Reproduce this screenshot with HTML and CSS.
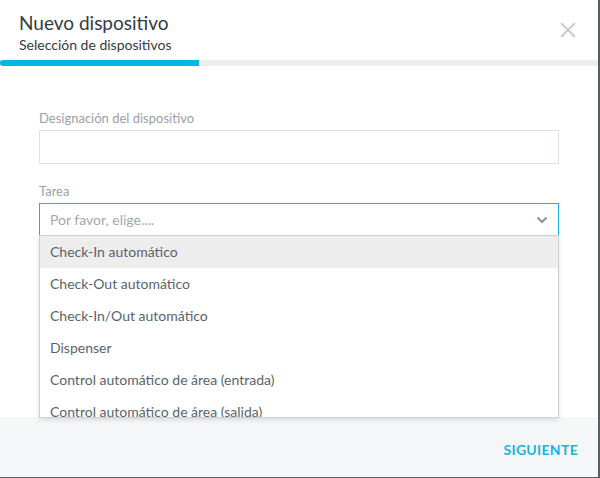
FILE: index.html
```html
<!DOCTYPE html>
<html lang="es">
<head>
<meta charset="utf-8">
<link rel="stylesheet" href="styles.css">
</head>
<body>
<div class="modal">
  <header class="head">
    <div class="titles">
      <h1 class="title">Nuevo dispositivo</h1>
      <div class="subtitle">Selección de dispositivos</div>
    </div>
    <button class="close" aria-label="Cerrar">
      <svg width="16" height="16" viewBox="0 0 16 16"><path d="M1 1L15 15M15 1L1 15" stroke="#c8cacc" stroke-width="1.8" fill="none"/></svg>
    </button>
  </header>
  <div class="progress"><div class="progress-fill" style="width:199px"></div></div>
  <main class="body">
    <label class="label">Designación del dispositivo</label>
    <div class="input"></div>
    <label class="label label-task">Tarea</label>
    <div class="select-wrap">
      <div class="select">
        <span class="placeholder">Por favor, elige....</span>
        <svg class="chev" width="12" height="8" viewBox="0 0 12 8"><path d="M1.5 1.5L6 6L10.5 1.5" stroke="#8f959a" stroke-width="2.2" fill="none"/></svg>
      </div>
      <ul class="menu">
        <li class="opt active">Check-In automático</li>
        <li class="opt">Check-Out automático</li>
        <li class="opt">Check-In/Out automático</li>
        <li class="opt">Dispenser</li>
        <li class="opt">Control automático de área (entrada)</li>
        <li class="opt">Control automático de área (salida)</li>
      </ul>
    </div>
  </main>
  <footer class="foot">
    <button class="next">SIGUIENTE</button>
  </footer>
</div>
</body>
</html>
```
FILE: styles.css
```css
* { box-sizing: border-box; }
html, body { margin: 0; padding: 0; }
body {
  background: #5a5c5e;
  width: 600px;
  height: 478px;
  overflow: hidden;
  font-family: "Lato", "Open Sans", sans-serif;
}
.modal {
  width: 598px;
  height: 477px;
  background: #fff;
  display: flex;
  flex-direction: column;
}
.head {
  display: flex;
  justify-content: space-between;
  align-items: flex-start;
  padding: 12px 22px 0 19px;
}
.title {
  margin: 0;
  font-size: 19px;
  line-height: 22px;
  font-weight: 400;
  color: #333b41;
}
.subtitle {
  font-size: 14px;
  line-height: 20px;
  color: #333b41;
  margin-top: 1px;
}
.close {
  border: 0;
  background: none;
  padding: 0;
  margin-top: 10px;
  width: 16px;
  height: 16px;
  display: flex;
}
.progress {
  margin-top: 5px;
  height: 6px;
  background: #eceeef;
}
.progress-fill {
  height: 100%;
  background: #00b8e3;
  border-radius: 3px 0 0 3px;
}
.body {
  flex: 1;
  padding: 44px 39px 0 39px;
  display: flex;
  flex-direction: column;
}
.label {
  font-size: 13px;
  line-height: 16px;
  color: #9ba0a4;
}
.input {
  margin-top: 4px;
  height: 34px;
  border: 1px solid #dde3e3;
}
.label-task { margin-top: 19px; }
.select-wrap {
  position: relative;
  margin-top: 4px;
}
.select {
  height: 33px;
  border: 1px solid #19b5de;
  display: flex;
  align-items: center;
  justify-content: space-between;
  padding: 0 10px 0 10px;
}
.placeholder {
  font-size: 14px;
  color: #a3a8ab;
}
.menu {
  position: absolute;
  left: 0;
  right: 0;
  top: 32px;
  margin: 0;
  padding: 0;
  list-style: none;
  background: #fff;
  border: 1px solid #cfcfcf;
  box-shadow: 0 2px 5px rgba(0,0,0,0.12);
  height: 183px;
  overflow: hidden;
  z-index: 2;
}
.opt {
  height: 32px;
  line-height: 32px;
  padding-left: 10px;
  font-size: 14px;
  color: #59646c;
  white-space: nowrap;
}
.opt.active { background: #ededed; }
.foot {
  height: 60px;
  background: #f6f7f9;
  display: flex;
  align-items: center;
  justify-content: flex-end;
  padding-right: 20px;
}
.next {
  border: 0;
  background: none;
  padding: 0;
  font-family: inherit;
  font-size: 14px;
  font-weight: 700;
  letter-spacing: 0.3px;
  color: #19b5de;
  margin-top: 4px;
}
```
